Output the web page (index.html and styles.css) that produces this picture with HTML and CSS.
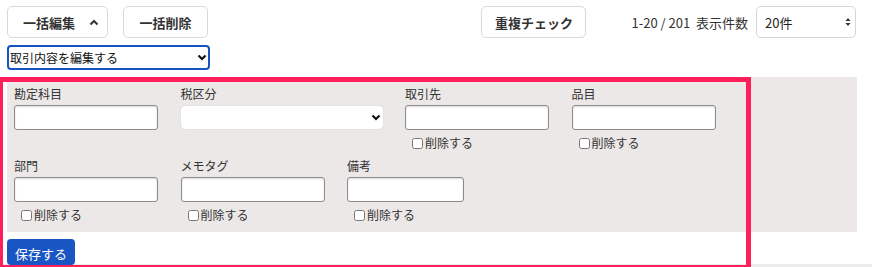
FILE: index.html
```html
<!DOCTYPE html>
<html lang="ja">
<head>
<meta charset="utf-8">
<link rel="stylesheet" href="styles.css">
</head>
<body>
<div class="toolbar">
  <button class="btn btn-bulk">一括編集<svg class="caret" width="10" height="7" viewBox="0 0 10 7"><path d="M1.5 5.5 L5 2 L8.5 5.5" fill="none" stroke="#333" stroke-width="2"/></svg></button>
  <button class="btn btn-del">一括削除</button>
  <div class="right">
    <button class="btn btn-dup">重複チェック</button>
    <span class="count">1-20 / 201&nbsp;&nbsp;表示件数</span>
    <div class="sel-wrap per-page">
      <select class="per-select"><option>20件</option></select>
      <svg class="updown" width="6" height="10" viewBox="0 0 6 10"><path d="M3 1 L5.5 4 L0.5 4 Z M3 9 L5.5 6 L0.5 6 Z" fill="#333"/></svg>
    </div>
  </div>
</div>
<div class="mode-row">
  <div class="sel-wrap mode">
    <select class="mode-select"><option>取引内容を編集する</option></select>
    <svg class="chev" width="10" height="7" viewBox="0 0 10 7"><path d="M1.5 1.5 L5 5 L8.5 1.5" fill="none" stroke="#111" stroke-width="2.2"/></svg>
  </div>
</div>
<div class="editor">
  <div class="panel">
    <div class="row">
      <div class="field"><label class="lbl">勘定科目</label><input class="inp" type="text"></div>
      <div class="field">
        <label class="lbl">税区分</label>
        <div class="sel-wrap tax"><select class="tax-select"><option></option></select>
          <svg class="chev" width="10" height="7" viewBox="0 0 10 7"><path d="M1.5 1.5 L5 5 L8.5 1.5" fill="none" stroke="#111" stroke-width="2.2"/></svg>
        </div>
      </div>
      <div class="field"><label class="lbl">取引先</label><input class="inp" type="text"><label class="chk"><input type="checkbox">削除する</label></div>
      <div class="field"><label class="lbl">品目</label><input class="inp" type="text"><label class="chk"><input type="checkbox">削除する</label></div>
    </div>
    <div class="row row2">
      <div class="field"><label class="lbl">部門</label><input class="inp" type="text"><label class="chk"><input type="checkbox">削除する</label></div>
      <div class="field"><label class="lbl">メモタグ</label><input class="inp" type="text"><label class="chk"><input type="checkbox">削除する</label></div>
      <div class="field"><label class="lbl">備考</label><input class="inp inp-short" type="text"><label class="chk"><input type="checkbox">削除する</label></div>
    </div>
  </div>
  <div class="actions"><button class="save">保存する</button></div>
  <div class="highlight"></div>
</div>
<div class="table-head"></div>
</body>
</html>
```
FILE: styles.css
```css
* { box-sizing: border-box; }
body {
  margin: 0;
  font-family: "Noto Sans CJK JP", "Noto Sans", sans-serif;
  color: #333;
  background: #fff;
  width: 872px;
  height: 267px;
  overflow: hidden;
}
.toolbar {
  display: flex;
  align-items: center;
  padding: 6px 16px 0 7px;
  height: 38px;
}
.btn {
  height: 32px;
  background: #fff;
  border: 1px solid #d9d9d9;
  border-radius: 5px;
  font-family: inherit;
  font-weight: bold;
  font-size: 13px;
  color: #333;
  padding: 0;
  display: flex;
  align-items: center;
  justify-content: center;
}
.btn-bulk { width: 101px; justify-content: flex-start; padding-left: 15px; }
.caret { margin-left: 14px; }
.btn-del { width: 85px; margin-left: 15px; }
.right { margin-left: auto; display: flex; align-items: center; }
.btn-dup { width: 105px; }
.count { font-size: 13px; margin-left: 45px; color: #333; }
.sel-wrap { position: relative; width: fit-content; }
.per-page { margin-left: 8px; }
.per-select {
  appearance: none;
  display: block;
  width: 100px;
  height: 32px;
  border: 1px solid #d6d6d6;
  border-radius: 5px;
  background: #fff;
  font-family: inherit;
  font-size: 13px;
  color: #222;
  padding: 0 0 0 8px;
}
.updown { position: absolute; right: 5px; top: 11px; }
.mode-row { padding: 7px 7px 0 7px; height: 33px; }
.mode-select {
  appearance: none;
  display: block;
  width: 203px;
  height: 25px;
  border: 2px solid #1554c0;
  border-radius: 4px;
  background: #fff;
  font-family: inherit;
  font-size: 12px;
  color: #111;
  padding: 0 0 0 1px;
  outline: none;
}
.chev { position: absolute; right: 3px; top: 9px; }
.editor { position: relative; }
.panel {
  margin: 6px 15px 0 7px;
  background: #ece8e7;
  padding: 9px 7px 11px 7px;
  height: 155px;
}
.row { display: flex; gap: 22.5px; }
.row2 { margin-top: 7px; }
.field { display: flex; flex-direction: column; align-items: flex-start; }
.lbl { font-size: 12px; line-height: 16px; margin-bottom: 3px; color: #333; }
.inp {
  width: 144px;
  height: 25px;
  border: 1px solid #8c8c8c;
  border-radius: 3px;
  background: #fff;
  box-shadow: inset 0 1px 2px rgba(0,0,0,0.15);
  margin: 0;
}
.inp-short { width: 117px; }
.tax { margin-top: 1px; }
.tax-select {
  appearance: none;
  display: block;
  width: 202px;
  height: 23px;
  border: none;
  border-radius: 4px;
  background: #fff;
  box-shadow: 0 0 1px rgba(0,0,0,0.25);
  margin: 0;
}
.tax .chev { top: 8px; right: 2px; }
.chk {
  display: flex;
  align-items: center;
  font-size: 12px;
  line-height: 16px;
  margin-top: 5px;
  padding-left: 7px;
  color: #333;
}
.chk input {
  width: 11px;
  height: 11px;
  margin: 0 2px 0 0;
}
.actions { padding: 7px 7px 0 7px; height: 32px; }
.save {
  width: 68px;
  height: 26px;
  background: #1a55c4;
  color: #fff;
  border: none;
  border-radius: 4px;
  font-family: inherit;
  font-size: 13px;
  padding: 2px 0 0 0;
}
.highlight {
  position: absolute;
  left: -2px;
  top: 0;
  width: 753px;
  height: 193px;
  border: 5px solid #ff1f5b;
  pointer-events: none;
}
.table-head { height: 10px; background: #ececec; }
```
